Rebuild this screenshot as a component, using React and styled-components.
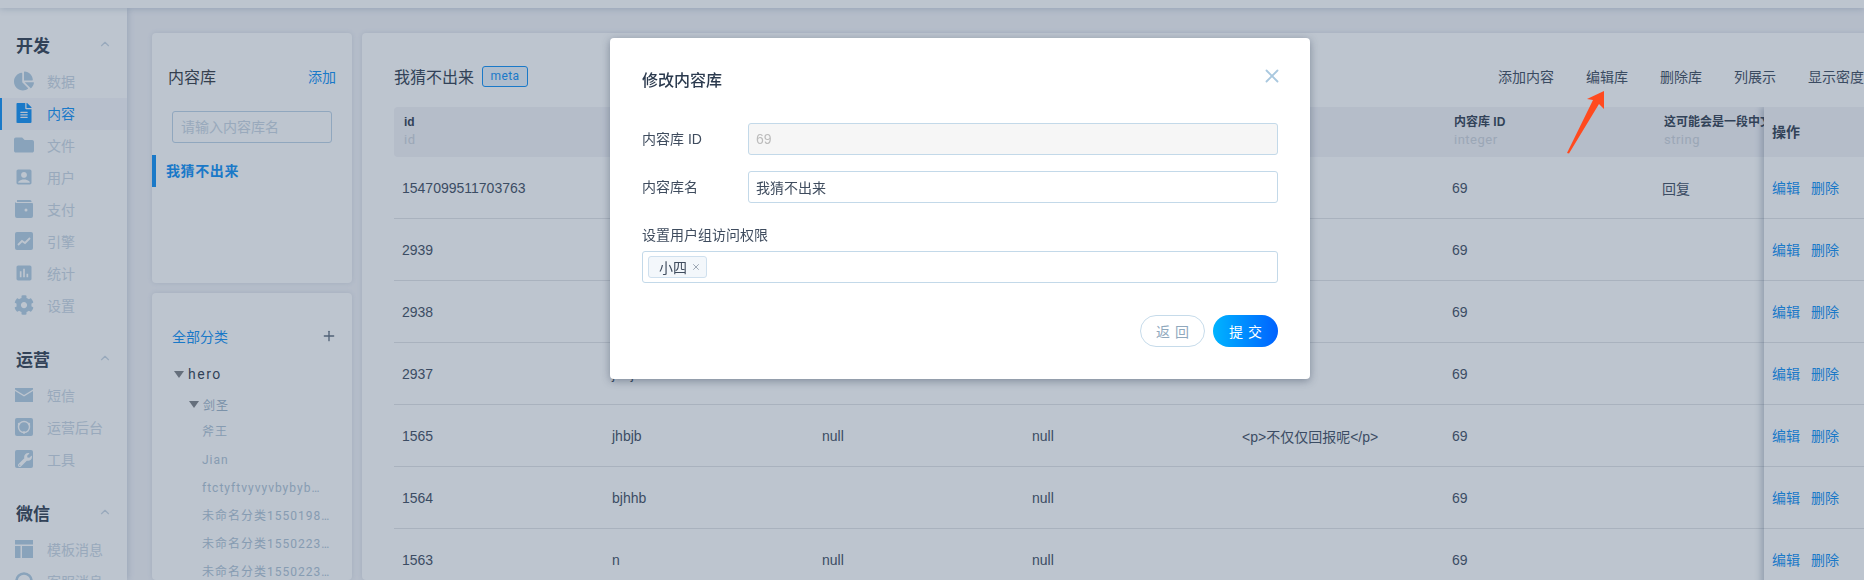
import React from "react";
import styled, { createGlobalStyle } from "styled-components";
import { FaChartPie, FaFileAlt, FaFolder, FaCog, FaWrench } from "react-icons/fa";
import { MdAccountBox, MdAssessment } from "react-icons/md";
import { FiChevronUp, FiX, FiPlus } from "react-icons/fi";

const blue = "#0d8ef5";
const ink = "#303c4e";
const muted = "#c9d6e3";
const iconColor = "#b2cde2";
const cjk = `"Liberation Sans", "Noto Sans CJK SC", sans-serif`;
const roboto = `Roboto, "Noto Sans CJK SC", sans-serif`;

const GlobalStyle = createGlobalStyle`
  html, body {
    margin: 0;
    height: 100%;
    overflow: hidden;
  }
  body {
    font-family: ${cjk};
    font-size: 14px;
    background: #f3f3f7;
    color: ${ink};
  }
  * { box-sizing: border-box; }
`;

const Page = styled.div`
  height: 100vh;
  display: flex;
  flex-direction: column;
  overflow: hidden;
`;

const TopBar = styled.div`
  flex: 0 0 8px;
  background: #fff;
  box-shadow: 0 1px 6px rgba(60, 90, 130, 0.25);
  position: relative;
  z-index: 2;
`;

const Body = styled.div`
  flex: 1;
  min-height: 0;
  display: flex;
`;

const Sidebar = styled.aside`
  flex: 0 0 127px;
  background: #fff;
  box-shadow: 1px 0 6px rgba(60, 90, 130, 0.22);
  padding-top: 21px;
  overflow: hidden;
  position: relative;
  z-index: 1;
`;

const Group = styled.div`
  margin-bottom: 21px;
`;

const GroupTitle = styled.div`
  height: 32px;
  margin-bottom: 5px;
  padding: 0 15px 2px 16px;
  display: flex;
  align-items: center;
  justify-content: space-between;
  font-size: 17px;
  font-weight: 700;
  color: ${ink};
  svg {
    color: ${muted};
    font-size: 14px;
  }
`;

const NavItem = styled.div`
  height: 32px;
  display: flex;
  align-items: center;
  gap: 13px;
  padding-left: ${(p) => (p.$active ? 12 : 14)}px;
  padding-bottom: 2px;
  border-left: ${(p) => (p.$active ? `2px solid ${blue}` : "none")};
  background: ${(p) => (p.$active ? "#f6f6fb" : "transparent")};
  color: ${(p) => (p.$active ? blue : muted)};
  > svg {
    width: 20px;
    height: 20px;
    flex: none;
    color: ${(p) => (p.$active ? blue : iconColor)};
  }
`;

const Content = styled.div`
  flex: 1;
  min-width: 0;
  display: flex;
  gap: 10px;
  padding: 25px 0 0 25px;
  overflow: hidden;
`;

const LeftColumn = styled.div`
  flex: 0 0 200px;
  display: flex;
  flex-direction: column;
  gap: 10px;
`;

const Card = styled.section`
  background: #fff;
  border-radius: 4px;
  box-shadow: 0 0 5px rgba(60, 90, 130, 0.14);
`;

const LibraryCard = styled(Card)`
  flex: 0 0 250px;
  padding-top: 32px;
`;

const LibraryHead = styled.div`
  height: 24px;
  padding: 0 16px 2px;
  display: flex;
  align-items: center;
  justify-content: space-between;
  font-size: 16px;
  color: #33383f;
`;

const TextLink = styled.a`
  font-size: 14px;
  color: ${blue};
`;

const SearchInput = styled.input`
  display: block;
  width: 160px;
  height: 32px;
  margin: 22px 20px 12px;
  padding: 0 8px;
  border: 1px solid #bcd2e6;
  border-radius: 3px;
  background: transparent;
  font: 14px ${cjk};
  outline: none;
  &::placeholder {
    color: ${muted};
  }
`;

const LibraryItem = styled.div`
  height: 32px;
  padding: 0 0 2px 10px;
  display: flex;
  align-items: center;
  border-left: 4px solid ${blue};
  color: ${blue};
  font-weight: 700;
  letter-spacing: 0.6px;
`;

const TreeCard = styled(Card)`
  flex: 1;
  min-height: 0;
  padding-top: 31px;
  overflow: hidden;
`;

const TreeHead = styled.div`
  height: 24px;
  padding: 0 15px 0 20px;
  margin-bottom: 12px;
  display: flex;
  align-items: center;
  justify-content: space-between;
  color: ${blue};
  svg {
    color: #5d6b7c;
    font-size: 16px;
  }
`;

const TreeRow = styled.div`
  height: 28px;
  display: flex;
  align-items: center;
  gap: 4px;
  padding-left: ${(p) => p.$indent}px;
  margin-top: ${(p) => p.$top || 0}px;
  font-family: ${roboto};
  font-size: ${(p) => p.$size}px;
  letter-spacing: ${(p) => p.$spacing}px;
  color: ${(p) => p.$color};
`;

const Caret = styled.i`
  width: 0;
  height: 0;
  border-left: 5.5px solid transparent;
  border-right: 5.5px solid transparent;
  border-top: 7px solid #7d7f84;
`;

const Leaf = styled.div`
  height: 28px;
  line-height: 28px;
  margin-left: 50px;
  width: 128px;
  font-family: ${roboto};
  font-size: 12px;
  letter-spacing: 1px;
  color: #aec2d4;
  white-space: nowrap;
  overflow: hidden;
  text-overflow: ellipsis;
`;

const Main = styled(Card)`
  flex: 0 0 1534px;
  min-width: 0;
  padding: 27px 32px 0;
`;

const MainHead = styled.div`
  height: 32px;
  margin-bottom: 15px;
  display: flex;
  align-items: center;
  justify-content: space-between;
`;

const TitleWrap = styled.div`
  display: flex;
  align-items: center;
  gap: 8px;
  font-size: 16px;
  color: ${ink};
`;

const MetaTag = styled.span`
  width: 46px;
  height: 21px;
  display: flex;
  align-items: center;
  justify-content: center;
  border: 1px solid ${blue};
  border-radius: 3px;
  background: #eaf4fd;
  color: ${blue};
  font-family: ${roboto};
  font-size: 12px;
  letter-spacing: 0.4px;
`;

const Toolbar = styled.div`
  display: flex;
  gap: 32px;
  color: #3c495b;
`;

const Table = styled.div`
  position: relative;
  overflow: hidden;
`;

const HeadRow = styled.div`
  height: 50px;
  display: grid;
  grid-template-columns: repeat(7, 210px);
  background: #f3f3f7;
  border-radius: 4px;
`;

const HeadCell = styled.div`
  padding: 7px 10px 0;
  white-space: nowrap;
  overflow: hidden;
`;

const HeadName = styled.div`
  height: 16px;
  line-height: 16px;
  font-size: 12px;
  font-weight: 700;
  color: ${ink};
`;

const HeadType = styled.div`
  height: 20px;
  line-height: 20px;
  font-family: ${roboto};
  font-size: 13px;
  letter-spacing: 0.5px;
  color: #cdd2da;
`;

const Row = styled.div`
  height: 62px;
  display: grid;
  grid-template-columns: repeat(7, 210px);
  align-items: center;
  border-bottom: 1px solid #e2e3e6;
`;

const Cell = styled.div`
  padding-left: 8px;
  color: #3e4b5e;
  white-space: nowrap;
`;

const FixedColumn = styled.div`
  position: absolute;
  top: 0;
  right: 0;
  bottom: 0;
  width: 100px;
  background: #fff;
  box-shadow: -3px 0 6px rgba(40, 60, 90, 0.28);
`;

const FixedHead = styled.div`
  height: 50px;
  padding: 0 0 3px 8px;
  display: flex;
  align-items: center;
  background: #f3f3f7;
  font-weight: 700;
  color: ${ink};
`;

const FixedCell = styled.div`
  height: 62px;
  padding: 0 0 2px 8px;
  display: flex;
  align-items: center;
  gap: 11px;
  border-bottom: 1px solid #e2e3e6;
`;

const Overlay = styled.div`
  position: fixed;
  inset: 0;
  z-index: 10;
  background: rgba(55, 80, 110, 0.33);
`;

const Modal = styled.div`
  position: relative;
  width: 700px;
  height: 341px;
  margin: 38px 0 0 610px;
  padding: 30px 32px 0;
  background: #fff;
  border-radius: 4px;
  box-shadow: 0 2px 8px rgba(30, 45, 70, 0.4);
`;

const ModalTitle = styled.h2`
  margin: 0 0 31px;
  height: 24px;
  line-height: 26px;
  font-size: 16px;
  font-weight: 500;
  color: #2b3a4e;
`;

const CloseButton = styled.button`
  position: absolute;
  top: 27px;
  right: 27px;
  padding: 0;
  display: flex;
  border: 0;
  background: none;
  color: #a9c8df;
  font-size: 22px;
`;

const FormRow = styled.div`
  display: flex;
  align-items: center;
  margin-bottom: 16px;
`;

const FormLabel = styled.label`
  flex: 0 0 106px;
  padding-bottom: 2px;
  color: #3f4c5e;
`;

const BlockLabel = styled.label`
  display: block;
  height: 22px;
  line-height: 22px;
  margin: 21px 0 5px;
  color: #3f4c5e;
`;

const TextInput = styled.input`
  flex: 1;
  min-width: 0;
  height: 32px;
  padding: 0 7px;
  border: 1px solid #c3d9e9;
  border-radius: 3px;
  outline: none;
  font: 14px ${cjk};
  color: ${(p) => (p.disabled ? "#bcbcbc" : "#3f4c5e")};
  background: ${(p) => (p.disabled ? "#f6f6f6" : "#fff")};
`;

const TagInput = styled.div`
  height: 32px;
  padding: 0 5px;
  display: flex;
  align-items: center;
  border: 1px solid #c3d9e9;
  border-radius: 3px;
`;

const Tag = styled.span`
  width: 59px;
  height: 22px;
  padding-left: 10px;
  display: flex;
  align-items: center;
  gap: 4px;
  background: #f3f7fb;
  border: 1px solid #cfe0ee;
  border-radius: 3px;
  color: #3f4c5e;
  svg {
    color: #8b98a6;
    font-size: 10px;
  }
`;

const ModalActions = styled.div`
  margin-top: 32px;
  display: flex;
  justify-content: flex-end;
  gap: 8px;
`;

const PillButton = styled.button`
  width: 65px;
  height: 32px;
  padding: 0 0 0 5px;
  border-radius: 16px;
  font: 14px ${cjk};
  letter-spacing: 5px;
  border: ${(p) => (p.$primary ? "0" : "1px solid #c6dbea")};
  color: ${(p) => (p.$primary ? "#fff" : "#8fa8bd")};
  background: ${(p) =>
    p.$primary ? "linear-gradient(90deg, #00b4ff, #0062ff)" : "#fff"};
`;

const ArrowMark = styled.svg`
  position: absolute;
  left: 1560px;
  top: 88px;
  width: 50px;
  height: 70px;
`;

const Square = ({ children }) => (
  <svg viewBox="0 0 20 20" fill="currentColor">
    <rect x="1" y="1" width="18" height="18" rx="2" />
    {children}
  </svg>
);

const WalletIcon = () => (
  <svg viewBox="0 0 20 20" fill="currentColor">
    <path d="M3 1h13a1.5 1.5 0 0 1 1.5 1.5V3H3z" />
    <path d="M2 4h16a1 1 0 0 1 1 1v12a2 2 0 0 1-2 2H3a2 2 0 0 1-2-2V3z" />
    <circle cx="12" cy="11" r="1.5" fill="#fff" />
  </svg>
);

const TrendIcon = () => (
  <Square>
    <path d="M4 14l4-4 3 2 5-5" fill="none" stroke="#fff" strokeWidth="1.8" />
  </Square>
);

const MailIcon = () => (
  <svg viewBox="0 0 20 20" fill="currentColor">
    <path d="M1 3h18v1.5l-9 5.5-9-5.5z" />
    <path d="M1 6l9 5.5L19 6v11H1z" />
  </svg>
);

const RingIcon = () => (
  <Square>
    <circle cx="10" cy="10" r="5.5" fill="none" stroke="#fff" strokeWidth="1.4" />
    <circle cx="5" cy="7" r="1.2" fill="#fff" />
    <circle cx="15" cy="7" r="1.2" fill="#fff" />
    <circle cx="10" cy="15.5" r="1.2" fill="#fff" />
  </Square>
);

const ToolIcon = () => (
  <Square>
    <FaWrench x="4" y="4" width="12" height="12" color="#fff" />
  </Square>
);

const QuiltIcon = () => (
  <svg viewBox="0 0 20 20" fill="currentColor">
    <rect x="1" y="1" width="18" height="4.5" />
    <rect x="1" y="7" width="5.5" height="12" />
    <rect x="8" y="7" width="11" height="12" />
  </svg>
);

const HeadsetIcon = () => (
  <svg viewBox="0 0 20 20" fill="none" stroke="currentColor" strokeWidth="2.6">
    <circle cx="10" cy="10" r="7.5" />
  </svg>
);

const navGroups = [
  {
    title: "开发",
    items: [
      ["数据", <FaChartPie key="i" />],
      ["内容", <FaFileAlt key="i" />, true],
      ["文件", <FaFolder key="i" />],
      ["用户", <MdAccountBox key="i" />],
      ["支付", <WalletIcon key="i" />],
      ["引擎", <TrendIcon key="i" />],
      ["统计", <MdAssessment key="i" />],
      ["设置", <FaCog key="i" />],
    ],
  },
  {
    title: "运营",
    items: [
      ["短信", <MailIcon key="i" />],
      ["运营后台", <RingIcon key="i" />],
      ["工具", <ToolIcon key="i" />],
    ],
  },
  {
    title: "微信",
    items: [
      ["模板消息", <QuiltIcon key="i" />],
      ["客服消息", <HeadsetIcon key="i" />],
    ],
  },
];

const leaves = [
  "斧王",
  "Jian",
  "ftctyftvyvyvbybyb…",
  "未命名分类1550198123456",
  "未命名分类1550223123456",
  "未命名分类1550223654321",
];

const columns = [
  ["id", "id"],
  ["name", "string"],
  ["title", "string"],
  ["cover", "string"],
  ["content", "string"],
  ["内容库 ID", "integer"],
  ["这可能会是一段中文描述", "string"],
];

const rows = [
  ["1547099511703763", "jhbjb", "null", "null", "", "69", "回复"],
  ["2939", "bjhhb", "", "null", "", "69", ""],
  ["2938", "n", "null", "null", "", "69", ""],
  ["2937", "jhbjb", "null", "null", "", "69", ""],
  ["1565", "jhbjb", "null", "null", "<p>不仅仅回报呢</p>", "69", ""],
  ["1564", "bjhhb", "", "null", "", "69", ""],
  ["1563", "n", "null", "null", "", "69", ""],
];

const App = () => {
  return (
    <Page>
      <GlobalStyle />
      <TopBar />
      <Body>
        <Sidebar>
          {navGroups.map((group) => (
            <Group key={group.title}>
              <GroupTitle>
                {group.title}
                <FiChevronUp />
              </GroupTitle>
              {group.items.map(([label, icon, active]) => (
                <NavItem key={label} $active={active}>
                  {icon}
                  {label}
                </NavItem>
              ))}
            </Group>
          ))}
        </Sidebar>
        <Content>
          <LeftColumn>
            <LibraryCard>
              <LibraryHead>
                内容库
                <TextLink>添加</TextLink>
              </LibraryHead>
              <SearchInput placeholder="请输入内容库名" />
              <LibraryItem>我猜不出来</LibraryItem>
            </LibraryCard>
            <TreeCard>
              <TreeHead>
                全部分类
                <FiPlus />
              </TreeHead>
              <TreeRow $indent={22} $size={14} $spacing={1.5} $color={ink}>
                <Caret />
                hero
              </TreeRow>
              <TreeRow $indent={37} $size={12} $spacing={1} $color="#9db3c7" $top={2}>
                <Caret />
                剑圣
              </TreeRow>
              {leaves.map((leaf) => (
                <Leaf key={leaf}>{leaf}</Leaf>
              ))}
            </TreeCard>
          </LeftColumn>
          <Main>
            <MainHead>
              <TitleWrap>
                我猜不出来
                <MetaTag>meta</MetaTag>
              </TitleWrap>
              <Toolbar>
                <span>添加内容</span>
                <span>编辑库</span>
                <span>删除库</span>
                <span>列展示</span>
                <span>显示密度</span>
              </Toolbar>
            </MainHead>
            <Table>
              <HeadRow>
                {columns.map(([name, type]) => (
                  <HeadCell key={name}>
                    <HeadName>{name}</HeadName>
                    <HeadType>{type}</HeadType>
                  </HeadCell>
                ))}
              </HeadRow>
              {rows.map((row) => (
                <Row key={row[0]}>
                  {row.map((value, i) => (
                    <Cell key={i}>{value}</Cell>
                  ))}
                </Row>
              ))}
              <FixedColumn>
                <FixedHead>操作</FixedHead>
                {rows.map((row) => (
                  <FixedCell key={row[0]}>
                    <TextLink>编辑</TextLink>
                    <TextLink>删除</TextLink>
                  </FixedCell>
                ))}
              </FixedColumn>
            </Table>
          </Main>
        </Content>
      </Body>
      <Overlay>
        <Modal>
          <ModalTitle>修改内容库</ModalTitle>
          <CloseButton>
            <FiX />
          </CloseButton>
          <FormRow>
            <FormLabel>内容库 ID</FormLabel>
            <TextInput disabled value="69" readOnly />
          </FormRow>
          <FormRow>
            <FormLabel>内容库名</FormLabel>
            <TextInput value="我猜不出来" readOnly />
          </FormRow>
          <BlockLabel>设置用户组访问权限</BlockLabel>
          <TagInput>
            <Tag>
              小四
              <FiX />
            </Tag>
          </TagInput>
          <ModalActions>
            <PillButton>返回</PillButton>
            <PillButton $primary>提交</PillButton>
          </ModalActions>
        </Modal>
        <ArrowMark viewBox="0 0 50 70">
          <polygon points="7,65 9,65.5 39,16 44,21 44,3 27,11 33,12" fill="#ff4a1f" />
        </ArrowMark>
      </Overlay>
    </Page>
  );
};

export default App;
